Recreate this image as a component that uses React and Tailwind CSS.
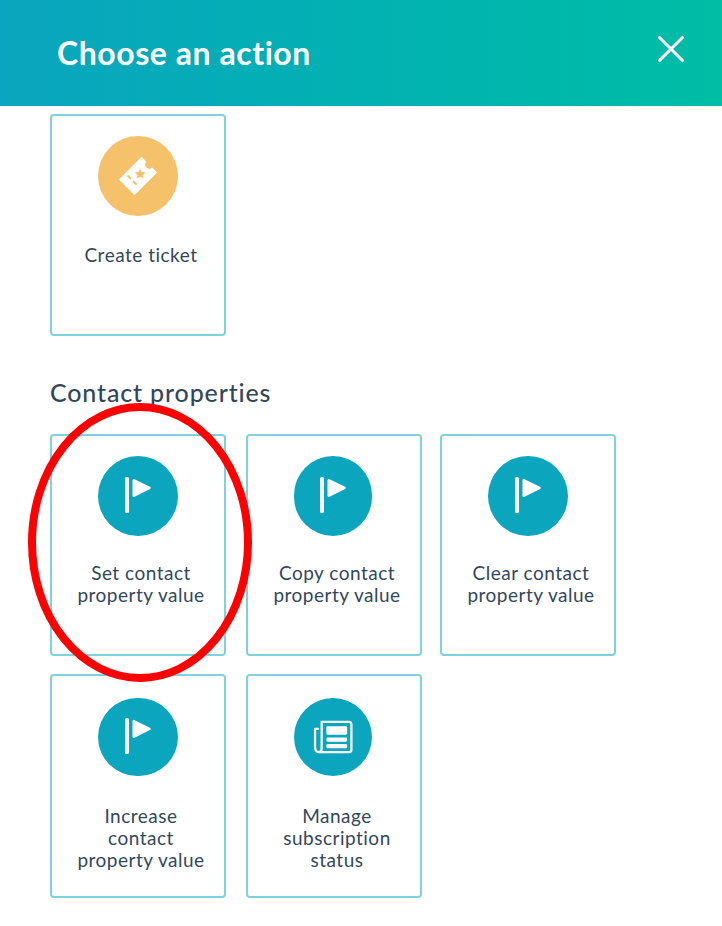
import React from 'react';
import { X } from 'lucide-react';

const FlagIcon = () => (
  <svg width="32" height="40" viewBox="0 0 32 40" fill="#fff">
    <rect x="3" y="1" width="4" height="36" rx="1.5" />
    <path d="M10.500 4.500c0-1 1-1.700 2-1.300L28 10.800c1 .5 1 1.700 0 2.200L12.500 20.800c-1 .4-2-.2-2-1.300z" />
  </svg>
);

const TicketIcon = () => (
  <svg width="40" height="40" viewBox="-20 -20 40 40">
    <g transform="rotate(-45)">
      <path
        fill="#fff"
        d="M-15 -11H15a1 1 0 0 1 1 1V-4a4 4 0 0 0 0 8V10a1 1 0 0 1-1 1H-15a1 1 0 0 1-1-1V-10a1 1 0 0 1 1-1z"
      />
      <path d="M-7 -8V8" stroke="#f5c26b" strokeWidth="2" strokeDasharray="5 3" />
      <path
        fill="#f5c26b"
        transform="rotate(45 3 0)"
        d="M3 -5.500l1.600 3.500 3.800.4-2.800 2.600.8 3.700L3 2.800-.4 4.700l.8-3.700-2.800-2.600 3.800-.4z"
      />
    </g>
  </svg>
);

const NewsIcon = () => (
  <svg width="40" height="34" viewBox="0 0 42 36" fill="none" stroke="#fff" strokeWidth="2.400" strokeLinejoin="round">
    <path d="M9 2h29a2.500 2.500 0 0 1 2.500 2.500v27a2.500 2.500 0 0 1-2.500 2.500H6" />
    <path d="M9 2v28c0 2.500-1.500 4-3 4s-4-1.500-4-4V9.500h3" strokeLinecap="round" />
    <rect x="14" y="6.500" width="22" height="9" rx="1.500" fill="#fff" stroke="none" />
    <rect x="14" y="18.500" width="22" height="4.500" rx="1.500" fill="#fff" stroke="none" />
    <rect x="14" y="25.500" width="22" height="4.500" rx="1.500" fill="#fff" stroke="none" />
  </svg>
);

const ActionCard = ({ icon, label, circle = 'bg-[#0ba5be]', size = 'w-20 h-20', className = 'h-[222px]', top = 'pt-5', gap = 'mt-[26px]' }) => (
  <div className={`w-[176px] rounded border-2 border-[#7fd1de] bg-white flex flex-col items-center ${top} ${className}`}>
    <div className={`rounded-full flex items-center justify-center ${size} ${circle}`}>{icon}</div>
    <div className={`pl-[22px] pr-4 text-center text-[19px] leading-[22px] tracking-[0.5px] text-[#33475b] whitespace-pre-line ${gap}`}>{label}</div>
  </div>
);

export default function App() {
  return (
    <div className="relative w-[722px] h-[926px] overflow-hidden bg-white font-['Lato',sans-serif]">
      <header className="h-[106px] bg-gradient-to-r from-[#0aa5be] to-[#00bda5] flex items-center justify-between pl-[57px] pr-[28px]">
        <h1 className="text-[32px] tracking-[0.55px] font-bold text-white leading-none">Choose an action</h1>
        <X className="text-white w-[46px] h-[46px] -mt-[8px]" strokeWidth={1.6} />
      </header>

      <div className="pl-[50px] pt-2">
        <ActionCard
          icon={<TicketIcon />}
          label="Create ticket"
          circle="bg-[#f5c26b]"
          gap="mt-[28px]"
        />

        <h2 className="mt-[41px] text-[25px] leading-[30px] tracking-[0.85px] font-medium text-[#33475b]">Contact properties</h2>

        <div className="mt-[27px] grid grid-cols-[196px_194px_176px] gap-y-[18px]">
          <ActionCard icon={<FlagIcon />} label={'Set contact\nproperty value'} />
          <ActionCard icon={<FlagIcon />} label={'Copy contact\nproperty value'} size="w-[78px] h-20 mr-[2px]" />
          <ActionCard icon={<FlagIcon />} label={'Clear contact\nproperty value'} />
          <ActionCard icon={<FlagIcon />} label={'Increase\ncontact\nproperty value'} className="h-[224px]" size="w-20 h-[78px]" top="pt-[22px]" gap="mt-[29px]" />
          <ActionCard icon={<NewsIcon />} label={'Manage\nsubscription\nstatus'} className="h-[224px]" size="w-[78px] h-[78px] mr-[2px]" top="pt-[22px]" gap="mt-[29px]" />
        </div>
      </div>

      <svg className="absolute left-[28px] top-[403px]" width="224" height="280" viewBox="0 0 224 280" fill="none">
        <ellipse cx="112" cy="139.500" rx="108" ry="135.500" stroke="#ff0000" strokeWidth="8" />
      </svg>
    </div>
  );
}
